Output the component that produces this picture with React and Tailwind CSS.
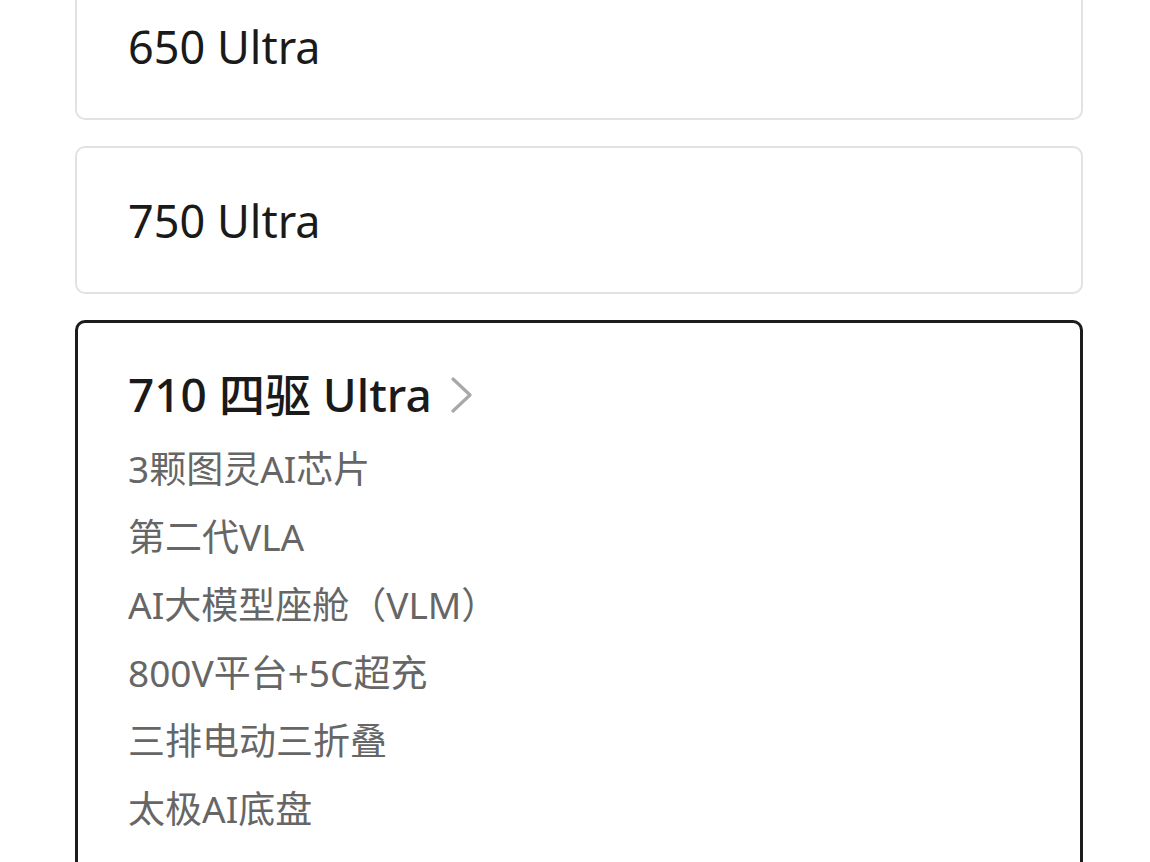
import React from "react";

const font = { fontFamily: '"Noto Sans", "Noto Sans CJK SC", sans-serif' };

function Card({ children, active }) {
  return (
    <div
      className={
        "rounded-[10px] bg-white " +
        (active ? "border-[3px] border-[#1c1c1c]" : "border-2 border-[#e2e2e2]")
      }
    >
      {children}
    </div>
  );
}

const features = [
  "3颗图灵AI芯片",
  "第二代VLA",
  "AI大模型座舱（VLM）",
  "800V平台+5C超充",
  "三排电动三折叠",
  "太极AI底盘",
];

export default function App() {
  return (
    <div className="h-[862px] w-[1150px] overflow-hidden bg-white" style={font}>
      <div className="mt-[-28px] flex flex-col gap-[26px] pl-[75px] pr-[67px]">
        <Card>
          <div className="flex h-[144px] items-center pl-[51px] text-[45px] leading-none text-[#1a1a1a]">
            650 Ultra
          </div>
        </Card>
        <Card>
          <div className="flex h-[144px] items-center pl-[51px] text-[45px] leading-none text-[#1a1a1a]">
            750 Ultra
          </div>
        </Card>
        <Card active>
          <div className="pl-[50px] pt-[37px] pb-[40px]">
            <div className="flex h-[68px] items-center gap-[18px] text-[46px] font-medium text-[#1a1a1a]">
              <span>710 四驱 Ultra</span>
              <svg width="24" height="36" viewBox="0 0 24 36" className="mt-[2px]">
                <polyline
                  points="3,2 20,18 3,34"
                  fill="none"
                  stroke="#a8a8a8"
                  strokeWidth="3.2"
                  strokeLinecap="round"
                  strokeLinejoin="round"
                />
              </svg>
            </div>
            <div className="mt-[7px] flex flex-col text-[37px] leading-[68px] text-[#666666]">
              {features.map((f) => (
                <div key={f}>{f}</div>
              ))}
            </div>
          </div>
        </Card>
      </div>
    </div>
  );
}
